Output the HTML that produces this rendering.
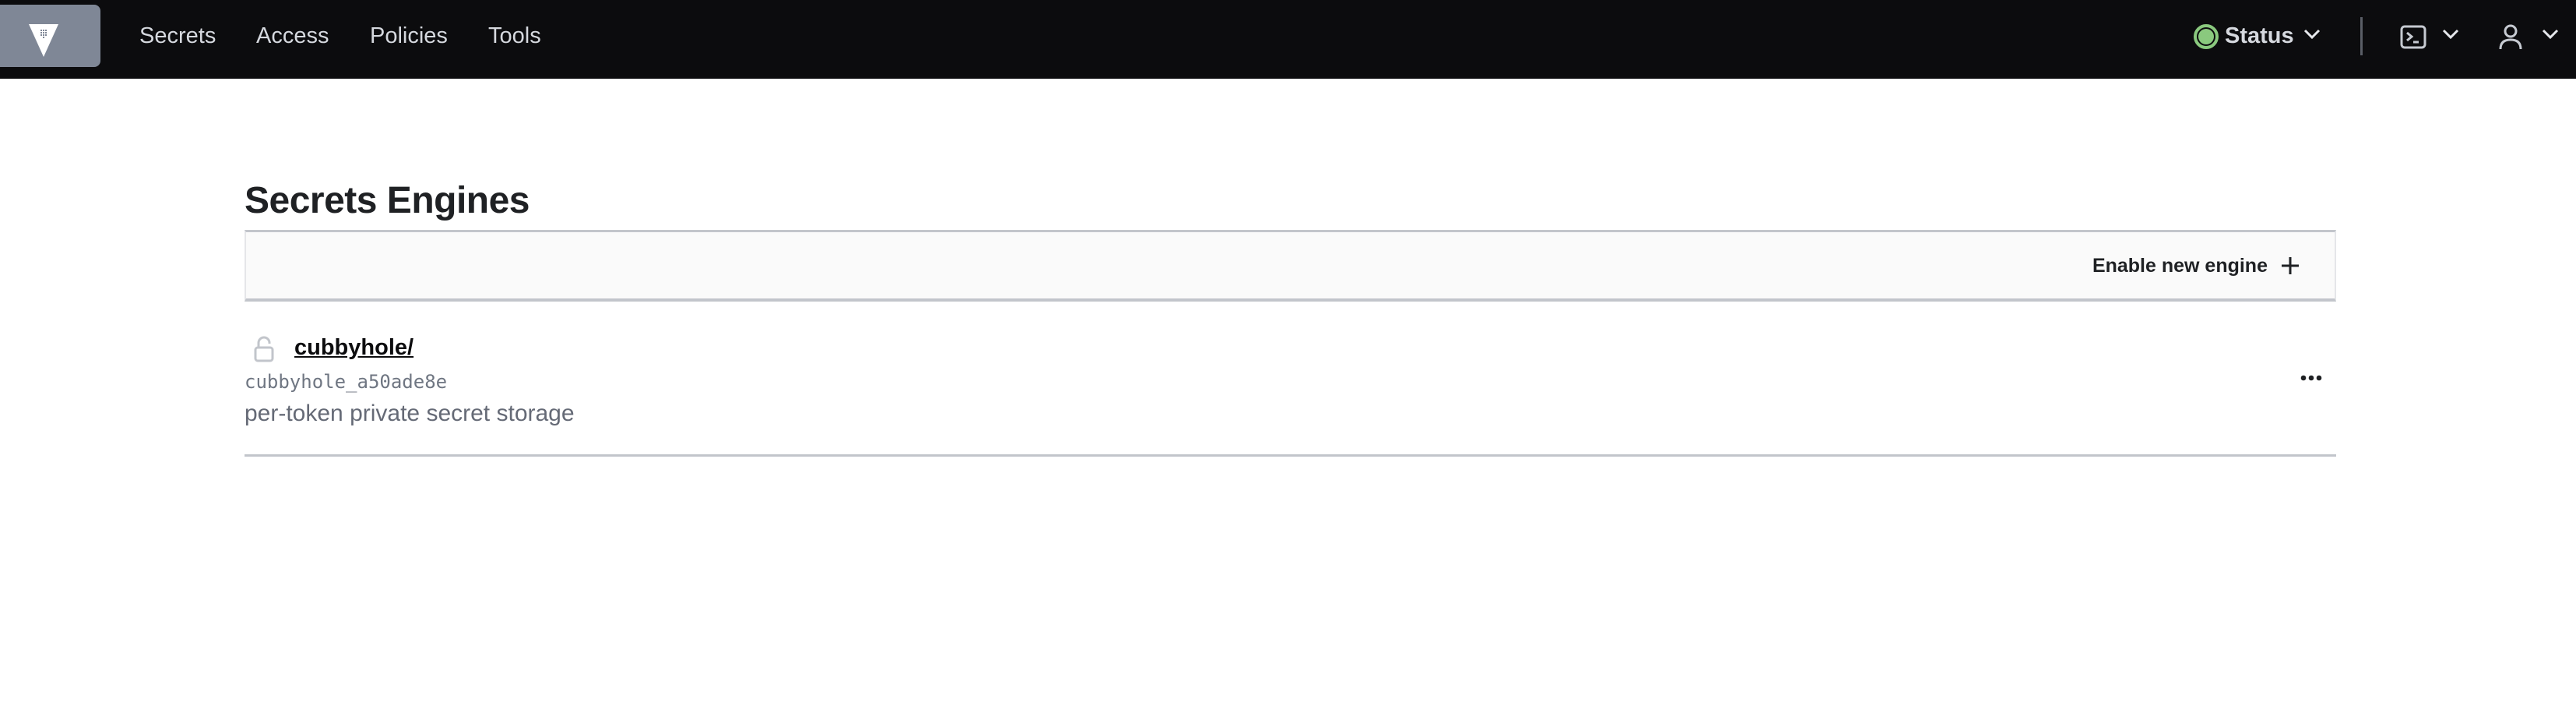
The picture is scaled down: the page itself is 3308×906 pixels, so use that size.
<!DOCTYPE html>
<html><head><meta charset="utf-8"><style>
*{margin:0;padding:0;box-sizing:border-box}
body{width:3308px;height:906px;background:#fff;font-family:"Liberation Sans",sans-serif;position:relative;overflow:hidden}
.nav{position:absolute;left:0;top:0;width:3308px;height:101px;background:#0c0c0e}
.logo{position:absolute;left:0;top:6px;width:129px;height:80px;background:#7f8796;border-radius:0 8px 8px 0}
.nl{position:absolute;top:28px;font-size:29px;color:#d5d8de;line-height:36px}
.a{position:absolute}
h1{position:absolute;left:314px;top:230px;font-size:48px;font-weight:bold;color:#1f2124;letter-spacing:-0.5px}
.tb{position:absolute;left:314px;top:295px;width:2686px;height:92px;background:#fafafa;border-top:3px solid #c2c5cb;border-bottom:4px solid #c2c5cb;border-left:2px solid #e5e6e9;border-right:2px solid #e5e6e9}
.en{position:absolute;right:86px;top:29px;font-size:25px;font-weight:bold;color:#1f2124}
</style></head><body>
<div class="nav">
 <div class="logo"><svg class="a" style="left:36px;top:24px" width="40" height="44" viewBox="0 0 40 44"><polygon points="1,1 39,1 20,43" fill="#fff"/><g fill="#7f8796"><rect x="16" y="8" width="2" height="2"/><rect x="19" y="8" width="2" height="2"/><rect x="22" y="8" width="2" height="2"/><rect x="16" y="11" width="2" height="2"/><rect x="19" y="11" width="2" height="2"/><rect x="22" y="11" width="2" height="2"/><rect x="16" y="14" width="2" height="2"/><rect x="19" y="14" width="2" height="2"/><rect x="22" y="14" width="2" height="2"/><rect x="19" y="17" width="2" height="2"/></g></svg></div>
 <div class="nl" style="left:179px">Secrets</div>
 <div class="nl" style="left:329px">Access</div>
 <div class="nl" style="left:475px">Policies</div>
 <div class="nl" style="left:627px">Tools</div>
 <svg class="a" style="left:2816px;top:30px" width="34" height="34"><circle cx="17" cy="17" r="14" fill="none" stroke="#8ac97e" stroke-width="4"/><circle cx="17" cy="17" r="10" fill="#8ac97e"/></svg>
 <div class="nl" style="left:2857px;font-weight:bold">Status</div>
 <svg class="a" style="left:2958px;top:36px" width="22" height="16"><path d="M2 3 L11 12 L20 3" fill="none" stroke="#e6e8ec" stroke-width="3"/></svg>
 <div class="a" style="left:3031px;top:22px;width:3px;height:49px;background:#5a5e66"></div>
 <svg class="a" style="left:3082px;top:32px" width="34" height="32"><rect x="2" y="2" width="30" height="27" rx="4" fill="none" stroke="#c6cad1" stroke-width="3"/><path d="M9 10 L15 15 L9 20 M17 22 L24 22" fill="none" stroke="#c6cad1" stroke-width="3"/></svg>
 <svg class="a" style="left:3136px;top:36px" width="22" height="16"><path d="M2 3 L11 12 L20 3" fill="none" stroke="#e6e8ec" stroke-width="3"/></svg>
 <svg class="a" style="left:3208px;top:30px" width="32" height="34"><circle cx="16" cy="10" r="7" fill="none" stroke="#c6cad1" stroke-width="3"/><path d="M3 33 Q3 21 16 21 Q29 21 29 33" fill="none" stroke="#c6cad1" stroke-width="3"/></svg>
 <svg class="a" style="left:3264px;top:36px" width="22" height="16"><path d="M2 3 L11 12 L20 3" fill="none" stroke="#e6e8ec" stroke-width="3"/></svg>
</div>
<h1>Secrets Engines</h1>
<div class="tb"><div class="en">Enable new engine</div>
 <svg class="a" style="right:44px;top:30px" width="26" height="26"><path d="M13 2 V24 M2 13 H24" stroke="#1f2124" stroke-width="3"/></svg></div>
<svg class="a" style="left:326px;top:431px" width="26" height="34"><path d="M6 14 V9 A7 7 0 0 1 20 9 V10" fill="none" stroke="#c2c5cb" stroke-width="3"/><rect x="2" y="15" width="22" height="17" rx="3" fill="none" stroke="#c2c5cb" stroke-width="3"/></svg>
<div class="a" style="left:378px;top:430px;font-size:29px;font-weight:bold;color:#0c0c0e;text-decoration:underline">cubbyhole/</div>
<div class="a" style="left:314px;top:476px;font-family:'DejaVu Sans Mono','Liberation Mono',monospace;font-size:24px;color:#6f7682">cubbyhole_a50ade8e</div>
<div class="a" style="left:314px;top:514px;font-size:30px;color:#656a76">per-token private secret storage</div>
<svg class="a" style="left:2954px;top:480px" width="28" height="10"><circle cx="4" cy="5" r="3.3" fill="#1f2124"/><circle cx="14" cy="5" r="3.3" fill="#1f2124"/><circle cx="24" cy="5" r="3.3" fill="#1f2124"/></svg>
<div class="a" style="left:314px;top:583px;width:2686px;height:3px;background:#c2c5cb"></div>
</body></html>
